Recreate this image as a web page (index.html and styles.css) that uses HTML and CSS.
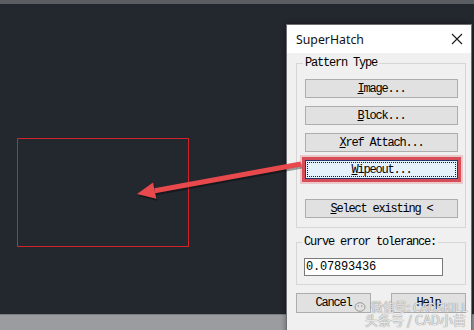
FILE: index.html
```html
<!DOCTYPE html>
<html>
<head>
    <meta charset="utf-8" />
    <meta name="viewport" content="width=device-width, initial-scale=1" />
    <title>SuperHatch</title>
    <link rel="stylesheet" href="styles.css">
</head>
<body>
    <div class="topbar"></div>
    <div class="workspace">
        <div class="dialog">
            <div class="titlebar">
                <span class="title">SuperHatch</span>
                <svg class="close" width="12" height="12" viewBox="0 0 12 12">
                    <path d="M1 1 L11 11 M11 1 L1 11" stroke="#1a1a1a" stroke-width="1.1" fill="none" />
                </svg>
            </div>
            <div class="dialog-body">
                <div class="group">
                    <span class="group-title">Pattern Type</span>
                    <div class="button-stack">
                        <div class="btn"><u>I</u>mage...</div>
                        <div class="btn"><u>B</u>lock...</div>
                        <div class="btn"><u>X</u>ref Attach...</div>
                        <div class="btn btn-focus"><span class="focus-ring"><u>W</u>ipeout...</span></div>
                        <div class="btn btn-select"><u>S</u>elect existing &lt;</div>
                    </div>
                </div>
                <div class="group group-tolerance">
                    <span class="group-title">Curve error tolerance:</span>
                    <div class="input">0.07893436</div>
                </div>
                <div class="footer-buttons">
                    <div class="btn btn-small">Cancel</div>
                    <div class="btn btn-small">Help</div>
                </div>
            </div>
        </div>
    </div>
    <div class="statusbar"></div>

    <svg class="markup" width="474" height="330" viewBox="0 0 474 330">
        <rect x="17.5" y="138.5" width="171" height="108" fill="none" stroke="#d2232b" stroke-width="1" />
        <g transform="translate(1 2)" opacity="0.35">
            <path d="M301 164 L154.7 190.7" stroke="#000" stroke-width="5" fill="none" />
            <path d="M137 194 L156.4 198.8 L153 182.6 Z" fill="#000" />
        </g>
        <path d="M301 164 L154.7 190.7" stroke="#e8494c" stroke-width="5" fill="none" />
        <path d="M137 194 L156.4 198.8 L153 182.6 Z" fill="#e8494c" />
    </svg>

    <div class="watermark">
        <div class="watermark-line">
            <svg width="14" height="12" viewBox="0 0 14 12">
                <ellipse cx="6" cy="6" rx="5" ry="4.3" fill="none" stroke="#9a9a9a" stroke-width="1" />
                <circle cx="4.3" cy="5" r="0.8" fill="#9a9a9a" />
                <circle cx="7.7" cy="5" r="0.8" fill="#9a9a9a" />
            </svg>
            <span>微信号: CADSKILL</span>
        </div>
        <div class="watermark-line second">头条号 / CAD小苗</div>
    </div>
</body>
</html>
```

FILE: styles.css
```css
body {
    margin: 0;
    width: 474px;
    height: 330px;
    overflow: hidden;
    background-color: #23272e;
    display: flex;
    flex-direction: column;
    position: relative;
}

.topbar {
    flex-shrink: 0;
    height: 4px;
    background-color: #5a5d62;
}

.workspace {
    flex: 1;
    position: relative;
}

.statusbar {
    flex-shrink: 0;
    height: 15px;
    border-top: 1px solid #7b7c80;
    background-color: #9b9ca0;
}

/* dialog window sits over the drawing area */
.dialog {
    position: absolute;
    left: 286px;
    top: 20px;
    width: 186px;
    height: 312px;
    box-sizing: border-box;
    background-color: #f0f0f0;
    border: 1px solid #6d6f73;
    box-shadow: 0 0 6px rgba(0, 0, 0, 0.4);
}

.titlebar {
    height: 28px;
    background-color: #ffffff;
    display: flex;
    align-items: center;
    justify-content: space-between;
    padding: 0 8px 0 9px;
}

.title {
    font-family: 'Noto Sans', 'Open Sans', sans-serif;
    font-size: 12.3px;
    color: #111;
}

.close {
    display: block;
}

.dialog-body {
    padding-left: 9px;
}

.group {
    width: 170px;
    box-sizing: border-box;
    margin-top: 10px;
    border: 1px solid #d6d6d6;
    padding: 0 7px 9px 8px;
}

.group-title {
    display: table;
    margin: -7px 0 0 -2px;
    padding: 0 2px;
    line-height: 13px;
    background-color: #f0f0f0;
    font-family: 'Liberation Mono', monospace;
    font-size: 12px;
    letter-spacing: -1.2px;
    color: #000;
}

.button-stack {
    display: flex;
    flex-direction: column;
    gap: 8px;
    margin-top: 9px;
}

.btn {
    height: 19px;
    box-sizing: border-box;
    background-color: #e1e1e1;
    border: 1px solid #adadad;
    display: flex;
    align-items: center;
    justify-content: center;
    font-family: 'Liberation Mono', monospace;
    font-size: 12px;
    letter-spacing: -1.2px;
    color: #000;
}

.btn u {
    text-underline-offset: 1px;
}

.btn-focus {
    background-color: #e5f1fb;
    border-color: #24386f;
    outline: 3px solid #d84e58;
    box-shadow: 0 0 0 5px rgba(216, 78, 88, 0.25);
    align-items: stretch;
    padding: 1px;
}

.focus-ring {
    flex: 1;
    border: 1px dotted #1c1c1c;
    display: flex;
    align-items: center;
    justify-content: center;
}

.btn-select {
    margin-top: 12px;
}

.group-tolerance {
    margin-top: 14px;
    padding: 0 7px 8px 7px;
}

.input {
    margin-top: 9px;
    width: 139px;
    height: 18px;
    box-sizing: border-box;
    background-color: #ffffff;
    border: 1px solid #7a7a7a;
    padding-left: 1px;
    font-family: 'Liberation Mono', monospace;
    font-size: 12px;
    letter-spacing: -0.2px;
    line-height: 16px;
    color: #000;
}

.footer-buttons {
    width: 170px;
    display: flex;
    justify-content: space-between;
    margin-top: 8px;
}

.btn-small {
    width: 75px;
    height: 20px;
}

/* drawing markup on the canvas, over everything */
.markup {
    position: absolute;
    top: 0;
    left: 0;
    width: 474px;
    height: 330px;
    pointer-events: none;
}

/* screenshot watermark lies over the dialog */
.watermark {
    position: absolute;
    left: 354px;
    top: 300px;
    font-family: 'Noto Sans CJK SC', 'Noto Sans', sans-serif;
    color: rgba(255, 255, 255, 0.8);
    text-shadow: 0 0 1px #8a8a8a, 0 0 1px #8a8a8a;
}

.watermark-line {
    display: flex;
    align-items: center;
    gap: 3px;
    font-size: 12px;
    line-height: 13px;
}

.watermark-line.second {
    margin-left: 11px;
    font-size: 13px;
    line-height: 14px;
}
```
